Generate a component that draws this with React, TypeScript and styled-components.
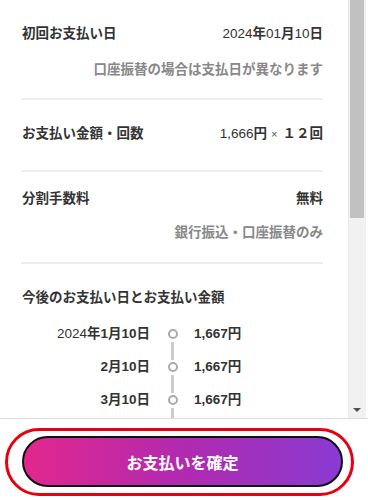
import styled, { createGlobalStyle } from 'styled-components';

const GlobalStyle = createGlobalStyle`
  html, body {
    margin: 0;
    padding: 0;
    background: #fff;
  }
  body {
    font-family: "Liberation Sans", "Noto Sans CJK JP", sans-serif;
    color: #333;
  }
`;

const Screen = styled.div`
  width: 368px;
  height: 500px;
  display: flex;
  flex-direction: column;
  background: #fff;
  overflow: hidden;
`;

const Body = styled.div`
  height: 418px;
  display: flex;
  padding-right: 2px;
`;

const Scroller = styled.div`
  flex: 1;
  overflow: hidden;
`;

const ScrollTrack = styled.div`
  width: 18px;
  display: flex;
  flex-direction: column;
  background: #f1f1f1;
  box-shadow: inset 1px 0 0 #e9e9e9;
`;

const ScrollThumb = styled.div<{ $size: number }>`
  height: ${({ $size }) => $size}px;
  margin: 0 2px;
  background: #c1c1c1;
`;

const ScrollSpace = styled.div`
  flex: 1;
`;

const ScrollButton = styled.div`
  height: 17px;
  display: flex;
  align-items: center;
  justify-content: center;

  &::before {
    content: '';
    width: 0;
    height: 0;
    border-left: 4px solid transparent;
    border-right: 4px solid transparent;
    border-top: 4px solid #505050;
  }
`;

const Content = styled.div`
  padding: 0 25px 0 21px;
  font-size: 13.5px;
  line-height: 20px;
`;

const Section = styled.section<{ $pt: number; $pb: number; $last?: boolean }>`
  padding: ${({ $pt }) => $pt}px 0 ${({ $pb }) => $pb}px;
  border-bottom: ${({ $last }) => ($last ? 'none' : '2px solid #eeeeee')};
`;

const Row = styled.div`
  display: flex;
  justify-content: space-between;
  align-items: center;
`;

const Label = styled.div`
  font-weight: 700;
  color: #333;
  padding-left: 1px;
`;

const Value = styled.div`
  font-weight: 700;
  color: #333;
  text-align: right;
`;

const Num = styled.span`
  font-weight: 400;
`;

const Times = styled.span`
  font-weight: 400;
  font-size: 11px;
  color: #555;
  margin: 0 5px 0 4px;
`;

const Note = styled.div<{ $mt: number }>`
  margin-top: ${({ $mt }) => $mt}px;
  text-align: right;
  font-weight: 700;
  color: #888;
`;

const Timeline = styled.div`
  margin-top: 9px;
`;

const TimelineRow = styled.div`
  display: grid;
  grid-template-columns: 129px 44px 1fr;
  height: 33px;
  align-items: center;
`;

const DateCell = styled.div`
  text-align: right;
  font-weight: 700;
  color: #333;
`;

const MarkerCell = styled.div`
  position: relative;
  height: 100%;
  display: flex;
  align-items: center;
  justify-content: center;

  &::after {
    content: '';
    position: absolute;
    left: calc(50% - 1px);
    top: calc(50% + 8px);
    width: 3px;
    height: 18px;
    background: #cccccc;
  }
`;

const Dot = styled.span`
  box-sizing: border-box;
  width: 10px;
  height: 10px;
  border: 2px solid #aaaaaa;
  border-radius: 50%;
  background: #fff;
  margin-left: 1px;
`;

const AmountCell = styled.div`
  font-weight: 700;
  color: #333;
`;

const Footer = styled.div`
  flex: 1;
  border-top: 1px solid #dcdcdc;
  padding: 9px 0 0 5px;
  display: flex;
  align-items: flex-start;
`;

const Ring = styled.div`
  display: flex;
  border: 3px solid #e50012;
  border-radius: 36px;
  padding: 5px 8px 6px 14px;
`;

const ConfirmButton = styled.button`
  box-sizing: border-box;
  width: 321px;
  height: 51px;
  border: 2px solid #111;
  border-radius: 26px;
  background: linear-gradient(90deg, #e2278d 0%, #b12ab0 50%, #8a3ad2 100%);
  color: #fff;
  font-family: "Liberation Sans", "Noto Sans CJK JP", sans-serif;
  font-size: 16px;
  font-weight: 700;
  cursor: pointer;
`;

const schedule = [
  { year: true, date: '1月10日', amount: '1,667円' },
  { year: false, date: '2月10日', amount: '1,667円' },
  { year: false, date: '3月10日', amount: '1,667円' },
];

export default function App() {
  return (
    <>
      <GlobalStyle />
      <Screen>
        <Body>
          <Scroller>
            <Content>
              <Section $pt={24} $pb={18}>
                <Row>
                  <Label>初回お支払い日</Label>
                  <Value>
                    <Num>2024</Num>年<Num>01</Num>月<Num>10</Num>日
                  </Value>
                </Row>
                <Note $mt={16}>口座振替の場合は支払日が異なります</Note>
              </Section>

              <Section $pt={24} $pb={26}>
                <Row>
                  <Label>お支払い金額・回数</Label>
                  <Value>
                    <Num>1,666</Num>円<Times>×</Times>１２回
                  </Value>
                </Row>
              </Section>

              <Section $pt={17} $pb={19}>
                <Row>
                  <Label>分割手数料</Label>
                  <Value>無料</Value>
                </Row>
                <Note $mt={14}>銀行振込・口座振替のみ</Note>
              </Section>

              <Section $pt={24} $pb={0} $last>
                <Label>今後のお支払い日とお支払い金額</Label>
                <Timeline>
                  {schedule.map((item) => (
                    <TimelineRow key={item.date}>
                      <DateCell>
                        {item.year && (
                          <>
                            <Num>2024</Num>年
                          </>
                        )}
                        {item.date}
                      </DateCell>
                      <MarkerCell>
                        <Dot />
                      </MarkerCell>
                      <AmountCell>{item.amount}</AmountCell>
                    </TimelineRow>
                  ))}
                </Timeline>
              </Section>
            </Content>
          </Scroller>
          <ScrollTrack>
            <ScrollThumb $size={218} />
            <ScrollSpace />
            <ScrollButton />
          </ScrollTrack>
        </Body>
        <Footer>
          <Ring>
            <ConfirmButton type="button">お支払いを確定</ConfirmButton>
          </Ring>
        </Footer>
      </Screen>
    </>
  );
}
